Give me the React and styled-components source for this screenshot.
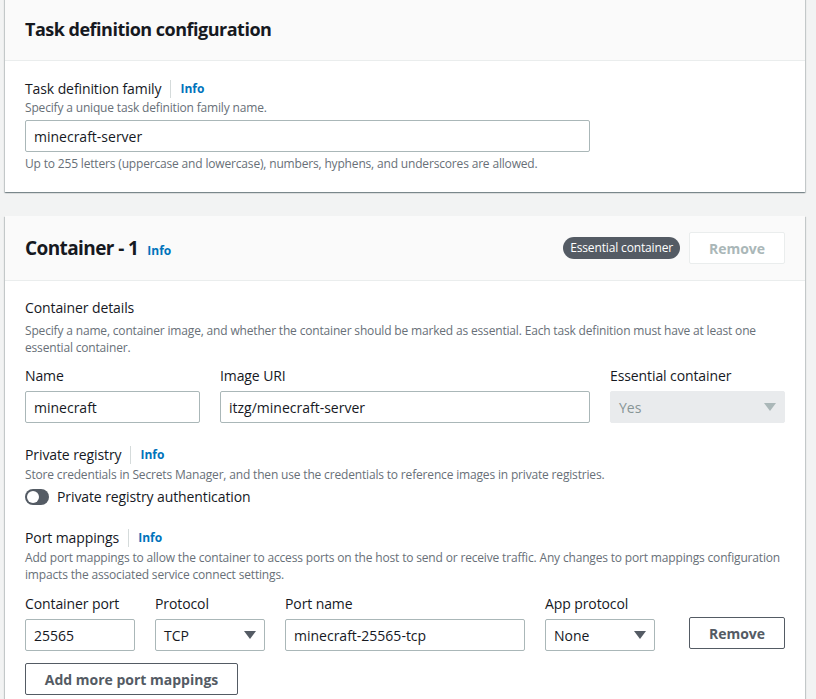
import styled, { createGlobalStyle } from "styled-components";

const GlobalStyle = createGlobalStyle`
  body {
    margin: 0;
    background: #f2f3f3;
    font-family: "Open Sans", "Noto Sans", sans-serif;
    color: #16191f;
  }
`;

const Page = styled.div`
  display: flex;
  flex-direction: column;
  gap: 24px;
  padding: 0 0 0 5px;
  margin-top: -1px;
`;

const Card = styled.section`
  width: 800px;
  background: #fff;
  box-shadow: 0 1px 1px 0 rgba(0, 28, 36, 0.3), 1px 1px 1px 0 rgba(0, 28, 36, 0.15),
    -1px 1px 1px 0 rgba(0, 28, 36, 0.15);
`;

const CardHeader = styled.header`
  height: ${(p) => p.$height}px;
  box-sizing: border-box;
  display: flex;
  align-items: center;
  justify-content: space-between;
  padding: ${(p) => p.$top || 0}px 20px ${(p) => p.$bottom || 0}px;
  background: #fafafa;
  border-bottom: 1px solid #eaeded;
`;

const Title = styled.h2`
  margin: 0;
  font-size: ${(p) => p.$size}px;
  font-weight: 700;
  letter-spacing: ${(p) => p.$tracking}px;
  line-height: 24px;
  display: flex;
  align-items: baseline;
  gap: 9px;
`;

const HeaderActions = styled.div`
  display: flex;
  align-items: center;
  gap: 9px;
  margin-top: -3px;
`;

const Badge = styled.span`
  background: #545b64;
  color: #fff;
  font-size: 12px;
  letter-spacing: -0.15px;
  line-height: 22px;
  padding: 0 7px;
  border-radius: 11px;
`;

const Button = styled.button`
  width: ${(p) => p.$width}px;
  height: 32px;
  box-sizing: border-box;
  background: #fff;
  border: 1px solid ${(p) => (p.disabled ? "#eaeded" : "#545b64")};
  color: ${(p) => (p.disabled ? "#aab7b8" : "#545b64")};
  border-radius: 2px;
  font-family: inherit;
  font-size: 14px;
  font-weight: 700;
  padding: 0;
`;

const Body = styled.div`
  padding: ${(p) => p.$pad || "16px 20px 20px"};
  display: flex;
  flex-direction: column;
`;

const Label = styled.div`
  font-size: 14px;
  letter-spacing: -0.1px;
  line-height: 22px;
  display: flex;
  align-items: center;
`;

const Divider = styled.span`
  width: 1px;
  height: 18px;
  background: #d5dbdb;
  margin: 0 9px;
`;

const Info = styled.a`
  color: #0073bb;
  font-size: 12px;
  font-weight: 700;
  letter-spacing: 0;
  text-decoration: none;
`;

const Desc = styled.div`
  font-size: 12px;
  letter-spacing: -0.17px;
  line-height: 17px;
  color: #687078;
  margin-top: ${(p) => p.$mt || 0}px;
`;

const Input = styled.div`
  width: ${(p) => p.$width}px;
  height: 32px;
  box-sizing: border-box;
  border: 1px solid #aab7b8;
  border-radius: 2px;
  padding: 0 8px;
  font-size: 14px;
  display: flex;
  align-items: center;
  justify-content: space-between;
  background: ${(p) => (p.$disabled ? "#e9ebed" : "#fff")};
  border-color: ${(p) => (p.$disabled ? "#e9ebed" : "#aab7b8")};
  color: ${(p) => (p.$disabled ? "#879596" : "#16191f")};
  margin-top: ${(p) => p.$mt || 0}px;
`;

const Section = styled.div`
  display: flex;
  flex-direction: column;
  margin-top: ${(p) => p.$mt || 0}px;
`;

const FieldRow = styled.div`
  display: flex;
  align-items: flex-end;
  gap: 20px;
  margin-top: ${(p) => p.$mt || 0}px;
`;

const Field = styled.div`
  display: flex;
  flex-direction: column;
  gap: 4px;
`;

const ToggleRow = styled.div`
  display: flex;
  align-items: center;
  gap: 8px;
  font-size: 14px;
  letter-spacing: -0.1px;
  line-height: 22px;
  margin-top: 3px;
`;

const Track = styled.span`
  width: 24px;
  height: 16px;
  box-sizing: border-box;
  border-radius: 8px;
  background: #545b64;
  display: flex;
  align-items: center;
  padding: 0 2px;
`;

const Knob = styled.span`
  width: 12px;
  height: 12px;
  border-radius: 50%;
  background: #fff;
`;

const RemoveSlot = styled.div`
  margin-left: auto;
  padding-bottom: 2px;
`;

function Caret({ color }) {
  return (
    <svg width="12" height="8" viewBox="0 0 12 8">
      <polygon points="0,0 12,0 6,8" fill={color} />
    </svg>
  );
}

function Select({ width, value, disabled }) {
  return (
    <Input $width={width} $disabled={disabled}>
      <span>{value}</span>
      <Caret color={disabled ? "#aab7b8" : "#545b64"} />
    </Input>
  );
}

export default function App() {
  return (
    <>
      <GlobalStyle />
      <Page>
        <Card>
          <CardHeader $height={62} $bottom={2}>
            <Title $size={18} $tracking={-0.5}>
              Task definition configuration
            </Title>
          </CardHeader>
          <Body $pad="17px 20px 20px">
            <Label>
              Task definition family
              <Divider />
              <Info href="#">Info</Info>
            </Label>
            <Desc $mt={-1}>Specify a unique task definition family name.</Desc>
            <Input $width={565} $mt={4}>minecraft-server</Input>
            <Desc $mt={3}>
              Up to 255 letters (uppercase and lowercase), numbers, hyphens, and underscores are allowed.
            </Desc>
          </Body>
        </Card>

        <Card>
          <CardHeader $height={65} $top={3}>
            <Title $size={19} $tracking={-0.6}>
              Container - 1 <Info href="#">Info</Info>
            </Title>
            <HeaderActions>
              <Badge>Essential container</Badge>
              <Button $width={96} disabled>
                Remove
              </Button>
            </HeaderActions>
          </CardHeader>
          <Body $pad="16px 20px 4px">
            <Label>Container details</Label>
            <Desc $mt={3}>
              Specify a name, container image, and whether the container should be marked as essential. Each task
              definition must have at least one essential container.
            </Desc>
            <FieldRow $mt={9}>
              <Field>
                <Label>Name</Label>
                <Input $width={175}>minecraft</Input>
              </Field>
              <Field>
                <Label>Image URI</Label>
                <Input $width={370}>itzg/minecraft-server</Input>
              </Field>
              <Field>
                <Label>Essential container</Label>
                <Select width={175} value="Yes" disabled />
              </Field>
            </FieldRow>

            <Section $mt={21}>
              <Label>
                Private registry
                <Divider />
                <Info href="#">Info</Info>
              </Label>
              <Desc>
                Store credentials in Secrets Manager, and then use the credentials to reference images in private
                registries.
              </Desc>
              <ToggleRow>
                <Track>
                  <Knob />
                </Track>
                Private registry authentication
              </ToggleRow>
            </Section>

            <Section $mt={19}>
              <Label>
                Port mappings
                <Divider />
                <Info href="#">Info</Info>
              </Label>
              <Desc>
                Add port mappings to allow the container to access ports on the host to send or receive traffic. Any
                changes to port mappings configuration impacts the associated service connect settings.
              </Desc>
              <FieldRow $mt={10}>
                <Field>
                  <Label>Container port</Label>
                  <Input $width={110}>25565</Input>
                </Field>
                <Field>
                  <Label>Protocol</Label>
                  <Select width={110} value="TCP" />
                </Field>
                <Field>
                  <Label>Port name</Label>
                  <Input $width={240}>minecraft-25565-tcp</Input>
                </Field>
                <Field>
                  <Label>App protocol</Label>
                  <Select width={110} value="None" />
                </Field>
                <RemoveSlot>
                  <Button $width={96}>Remove</Button>
                </RemoveSlot>
              </FieldRow>
              <FieldRow $mt={12}>
                <Button $width={213}>Add more port mappings</Button>
              </FieldRow>
            </Section>
          </Body>
        </Card>
      </Page>
    </>
  );
}
